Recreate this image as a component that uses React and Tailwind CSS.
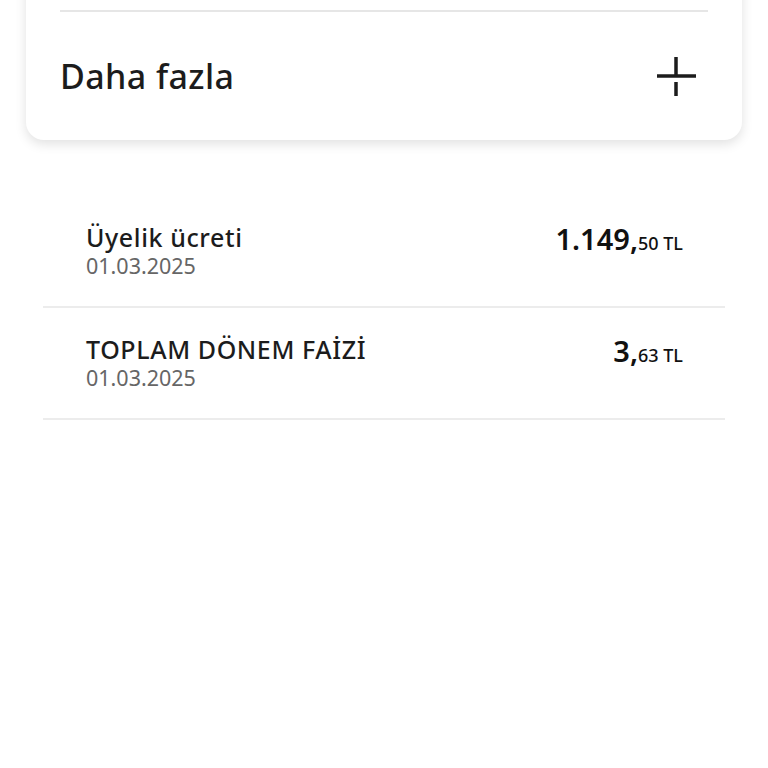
import { useState } from 'react'

const ITEMS = [
  { title: 'Üyelik ücreti', date: '01.03.2025', whole: '1.149', cents: '50' },
  { title: 'TOPLAM DÖNEM FAİZİ', date: '01.03.2025', whole: '3', cents: '63' },
]

function PlusIcon() {
  return (
    <svg width="48" height="48" viewBox="0 0 48 48" fill="none">
      <path d="M24 5v19M24 30v14M5 24h39" stroke="#1c1c1c" strokeWidth="3.5" />
    </svg>
  )
}

export default function App() {
  const [open, setOpen] = useState(false)

  return (
    <div className="w-[768px] h-[768px] bg-white overflow-hidden" style={{ fontFamily: '"Noto Sans", "Open Sans", sans-serif' }}>
      {/* kart */}
      <div className="mx-[26px] -mt-[20px] pt-[30px] bg-white rounded-b-[18px] shadow-[0_4px_12px_rgba(0,0,0,0.12)]">
        <div className="mx-[34px] h-[2px] bg-[#e6e6e6]" />
        <button
          onClick={() => setOpen(!open)}
          className="w-full h-[128px] flex items-center justify-between pl-[34px] pr-[42px]"
        >
          <span className="text-[34px] font-medium text-[#1c1c1c] leading-none tracking-[0.4px]">Daha fazla</span>
          <PlusIcon />
        </button>
      </div>

      {/* hareketler */}
      <div className="mx-[43px] mt-[56px]">
        {ITEMS.map(item => (
          <div key={item.title} className="h-[112px] flex items-start justify-between pl-[43px] pr-[42px] pt-[27px] border-b-2 border-[#ececec]">
            <div className="flex flex-col gap-[1px]">
              <p className="text-[25px] font-medium text-[#1c1c1c] leading-[29px] tracking-[0.6px]">{item.title}</p>
              <p className="text-[21.5px] text-[#666] leading-[26px]">{item.date}</p>
            </div>
            <p className="text-[#111] leading-[30px] pt-[1px]">
              <span className="text-[29px] font-semibold">{item.whole},</span>
              <span className="text-[18px] font-medium">{item.cents} TL</span>
            </p>
          </div>
        ))}
      </div>
    </div>
  )
}
